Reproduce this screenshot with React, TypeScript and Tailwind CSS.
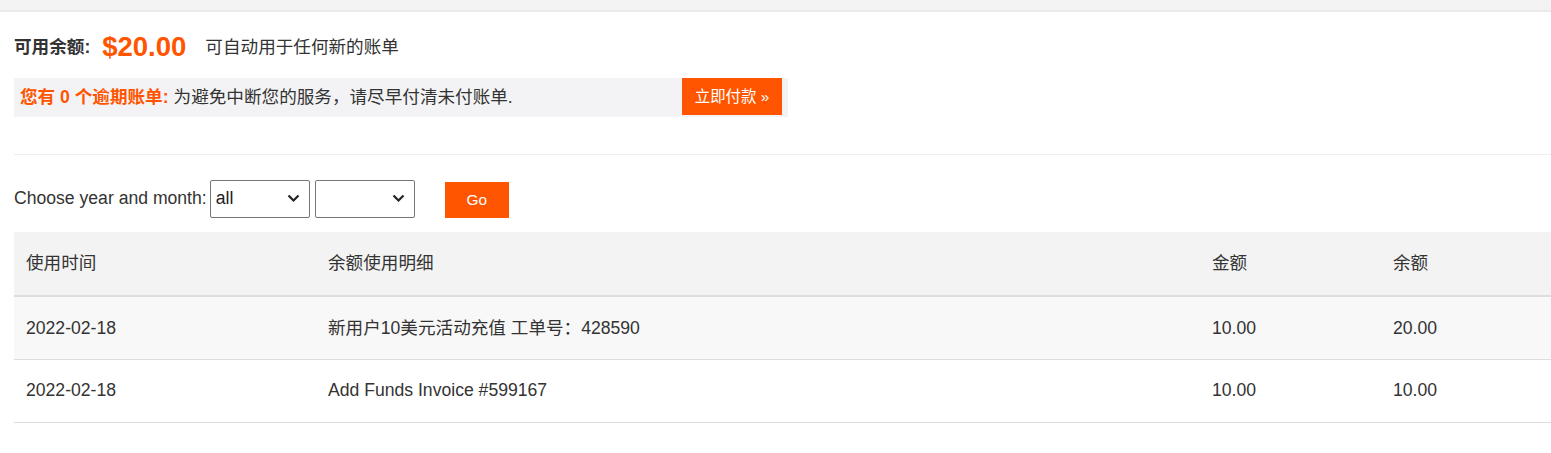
const rows = [
  { date: "2022-02-18", detail: "新用户10美元活动充值 工单号：428590", amount: "10.00", balance: "20.00" },
  { date: "2022-02-18", detail: "Add Funds Invoice #599167", amount: "10.00", balance: "10.00" },
];

function Chevron() {
  return (
    <svg width="13" height="9" viewBox="0 0 13 9" className="shrink-0">
      <path d="M1.5 1.5 L6.5 6.5 L11.5 1.5" fill="none" stroke="#222" strokeWidth="2.2" />
    </svg>
  );
}

function Select({ value }: { value: string }) {
  return (
    <div className="flex h-[38px] w-[100px] items-center justify-between rounded-[2px] border border-[#767676] bg-white pl-[5px] pr-[9px] text-[17.6px] text-[#222]">
      <span>{value}</span>
      <Chevron />
    </div>
  );
}

export default function App() {
  return (
    <div className="min-h-[453px] w-[1551px] overflow-hidden bg-white font-['Liberation_Sans','Noto_Sans_CJK_SC',sans-serif] text-[#333]">
      <div className="h-[12px] bg-[linear-gradient(#f3f3f3_0%,#f3f3f3_75%,#e6e6e6_100%)]" />

      <div className="pl-[14px]">
        <div className="mt-[20px] flex h-[30px] items-center">
          <span className="text-[17.6px] font-bold">可用余额:</span>
          <span className="ml-[12px] text-[27.5px] font-bold leading-[30px] text-[#ff5500]">$20.00</span>
          <span className="ml-[19px] text-[17.6px]">可自动用于任何新的账单</span>
        </div>

        <div className="mt-[16px] flex h-[39px] w-[774px] items-start bg-[#f3f3f5]">
          <div className="flex h-[38px] flex-1 items-center pl-[6px] text-[17.6px]">
            <span className="font-bold text-[#ff5500]">您有 0 个逾期账单:</span>
            <span className="ml-[5px]">为避免中断您的服务，请尽早付清未付账单.</span>
          </div>
          <button className="mr-[6px] flex h-[37px] w-[100px] items-center justify-center bg-[#ff5500] text-[15.4px] text-white">
            立即付款 »
          </button>
        </div>

        <div className="mt-[37px] border-t border-[#eeeeee]" />

        <div className="mt-[24px] flex items-center">
          <span className="mr-[3px] text-[17.6px]">Choose year and month:</span>
          <Select value="all" />
          <div className="ml-[5px]">
            <Select value="" />
          </div>
          <button className="ml-[30px] mt-[3px] h-[36px] w-[64px] bg-[#ff5500] text-[15.4px] text-white">Go</button>
        </div>

        <table className="mt-[14px] w-[1560px] table-fixed border-collapse text-[17.6px]">
          <colgroup>
            <col className="w-[302px]" />
            <col className="w-[884px]" />
            <col className="w-[181px]" />
            <col />
          </colgroup>
          <thead>
            <tr className="h-[64px] border-b-2 border-[#dddddd] bg-[#f3f3f3] text-left">
              <th className="px-[12px] font-normal">使用时间</th>
              <th className="px-[12px] font-normal">余额使用明细</th>
              <th className="px-[12px] font-normal">金额</th>
              <th className="px-[12px] font-normal">余额</th>
            </tr>
          </thead>
          <tbody>
            {rows.map((r, i) => (
              <tr key={i} className={`h-[63px] border-b border-[#dddddd] ${i % 2 === 0 ? "bg-[#f8f8f8]" : "bg-white"}`}>
                <td className="px-[12px]">{r.date}</td>
                <td className="px-[12px]">{r.detail}</td>
                <td className="px-[12px]">{r.amount}</td>
                <td className="px-[12px]">{r.balance}</td>
              </tr>
            ))}
          </tbody>
        </table>
      </div>
    </div>
  );
}
